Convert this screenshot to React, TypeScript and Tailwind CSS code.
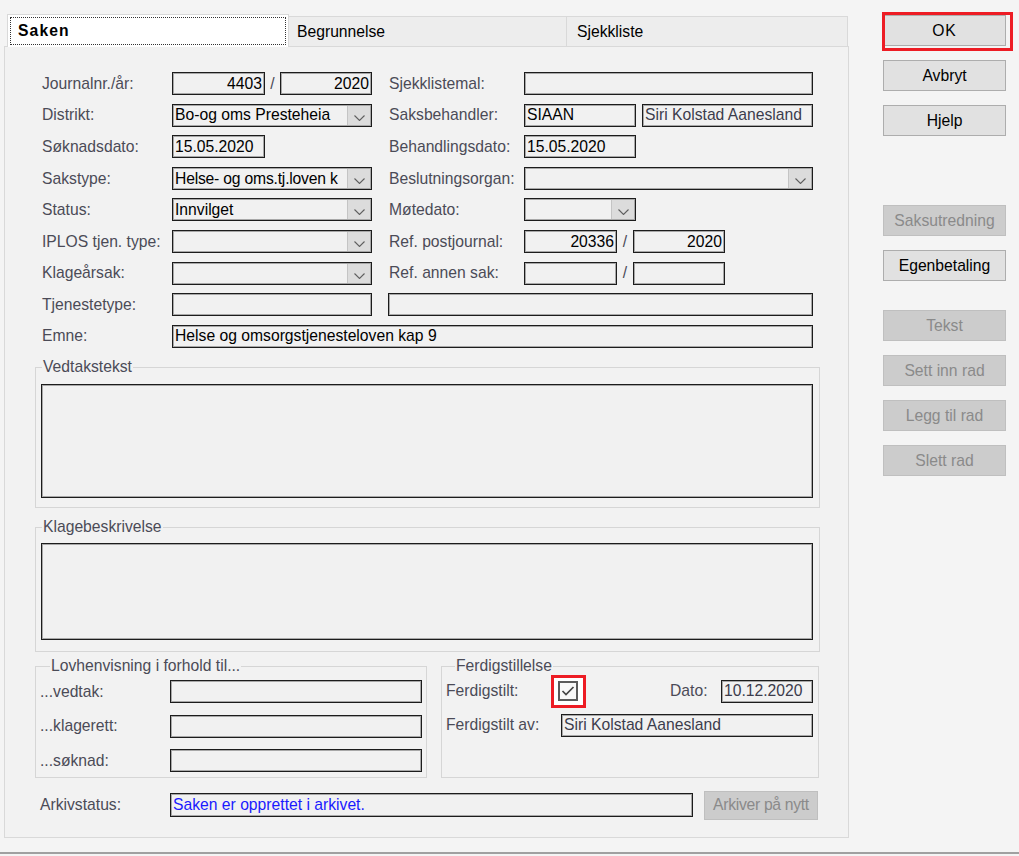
import clsx from 'clsx'
import { twMerge } from 'tailwind-merge'
import type { ReactNode } from 'react'

const cn = (...a: Parameters<typeof clsx>) => twMerge(clsx(...a))

function Label({ children, className }: { children?: ReactNode; className?: string }) {
  return <span className={cn('shrink-0 whitespace-nowrap text-[#4b4b57]', className)}>{children}</span>
}

function Box({ children, className }: { children?: ReactNode; className?: string }) {
  return (
    <div
      className={cn(
        'flex h-[23px] shrink-0 items-center overflow-hidden whitespace-nowrap border border-[#1c1c1c] bg-[#f1f1f1] px-[2px] shadow-[inset_0_0_0_1px_#a8a8a8]',
        className
      )}
    >
      {children}
    </div>
  )
}

function Combo({ children, className }: { children?: ReactNode; className?: string }) {
  return (
    <div
      className={cn(
        'flex h-[23px] shrink-0 items-stretch overflow-hidden border border-[#1c1c1c] bg-[#f1f1f1] shadow-[inset_0_0_0_1px_#a8a8a8]',
        className
      )}
    >
      <div className="flex min-w-0 flex-1 items-center overflow-hidden whitespace-nowrap pl-[2px]">{children}</div>
      <div className="m-[1px] flex w-[23px] shrink-0 items-end justify-center border-l border-[#c4c4c4] bg-[#dcdcdc] pb-[4px]">
        <svg width="11" height="6" viewBox="0 0 11 6">
          <polyline points="0.5,0.5 5.5,5.5 10.5,0.5" fill="none" stroke="#5f5f5f" strokeWidth="1.1" />
        </svg>
      </div>
    </div>
  )
}

function Group({ title, titleLeft, className, children }: { title: string; titleLeft: string; className?: string; children?: ReactNode }) {
  return (
    <div className={cn('relative shrink-0 border border-[#d6d6d6]', className)}>
      <span className={cn('absolute -top-[10px] bg-[#f2f2f2] px-[1px] leading-[18px] text-[#4b4b57]', titleLeft)}>{title}</span>
      {children}
    </div>
  )
}

function Btn({ children, disabled, className }: { children: ReactNode; disabled?: boolean; className?: string }) {
  return (
    <div
      className={cn(
        'flex h-[31px] w-[123px] shrink-0 items-center justify-center whitespace-nowrap border',
        disabled ? 'border-[#bfbfbf] bg-[#cccccc] text-[#8a8a8a]' : 'border-[#adadad] bg-[#e1e1e1] text-black',
        className
      )}
    >
      {children}
    </div>
  )
}

export default function App() {
  return (
    <div className="flex h-[856px] w-[1019px] flex-col overflow-hidden bg-[#f4f4f4] font-['Liberation_Sans',Arial,sans-serif] text-[15.7px] text-black">
      <div className="flex h-[852px]">
        {/* Tab control */}
        <div className="w-[850px] shrink-0 pl-[4px] pt-[14px]">
          <div className="flex h-[32px] items-end pl-[3px]">
            <div className="relative z-10 -mb-[1px] flex h-[33px] w-[282px] shrink-0 items-center border border-b-0 border-[#d9d9d9] bg-white p-[2px]">
              <div className="flex h-full w-full items-center border border-dotted border-[#333] pl-[7px] font-bold tracking-[1.1px]">Saken</div>
            </div>
            <div className="flex h-[30px] w-[278px] shrink-0 items-center border border-b-0 border-l-0 border-[#d9d9d9] bg-[#ededed] pl-[8px]">Begrunnelse</div>
            <div className="flex h-[30px] w-[281px] shrink-0 items-center border border-b-0 border-l-0 border-[#d9d9d9] bg-[#ededed] pl-[10px]">Sjekkliste</div>
          </div>

          <div className="h-[792px] w-[845px] border border-[#d9d9d9] bg-[#f2f2f2] pl-[30px] pt-[25px]">
            {/* Form rows */}
            <div className="flex flex-col gap-[8.6px] pl-[7px]">
              <div className="flex h-[23px] items-center">
                <div className="flex w-[330px] items-center">
                  <Label className="w-[130px]">Journalnr./år:</Label>
                  <Box className="w-[93px] justify-end">4403</Box>
                  <span className="w-[15px] text-center text-[#4b4b57]">/</span>
                  <Box className="w-[92px] justify-end">2020</Box>
                </div>
                <div className="ml-[17px] flex items-center">
                  <Label className="w-[135px]">Sjekklistemal:</Label>
                  <Box className="w-[289px]" />
                </div>
              </div>

              <div className="flex h-[23px] items-center">
                <div className="flex w-[330px] items-center">
                  <Label className="w-[130px]">Distrikt:</Label>
                  <Combo className="w-[200px]">Bo-og oms Presteheia</Combo>
                </div>
                <div className="ml-[17px] flex items-center">
                  <Label className="w-[135px]">Saksbehandler:</Label>
                  <Box className="w-[112px]">SIAAN</Box>
                  <Box className="ml-[6px] w-[171px] text-[#3c3c4c]">Siri Kolstad Aanesland</Box>
                </div>
              </div>

              <div className="flex h-[23px] items-center">
                <div className="flex w-[330px] items-center">
                  <Label className="w-[130px]">Søknadsdato:</Label>
                  <Box className="w-[93px]">15.05.2020</Box>
                </div>
                <div className="ml-[17px] flex items-center">
                  <Label className="w-[135px]">Behandlingsdato:</Label>
                  <Box className="w-[112px]">15.05.2020</Box>
                </div>
              </div>

              <div className="flex h-[23px] items-center">
                <div className="flex w-[330px] items-center">
                  <Label className="w-[130px]">Sakstype:</Label>
                  <Combo className="w-[200px]">
                    <span className="tracking-[-0.2px]">Helse- og oms.tj.loven k</span>
                  </Combo>
                </div>
                <div className="ml-[17px] flex items-center">
                  <Label className="w-[135px]">Beslutningsorgan:</Label>
                  <Combo className="w-[289px]" />
                </div>
              </div>

              <div className="flex h-[23px] items-center">
                <div className="flex w-[330px] items-center">
                  <Label className="w-[130px]">Status:</Label>
                  <Combo className="w-[200px]">Innvilget</Combo>
                </div>
                <div className="ml-[17px] flex items-center">
                  <Label className="w-[135px]">Møtedato:</Label>
                  <Combo className="w-[112px]" />
                </div>
              </div>

              <div className="flex h-[23px] items-center">
                <div className="flex w-[330px] items-center">
                  <Label className="w-[130px]">IPLOS tjen. type:</Label>
                  <Combo className="w-[200px]" />
                </div>
                <div className="ml-[17px] flex items-center">
                  <Label className="w-[135px]">Ref. postjournal:</Label>
                  <Box className="w-[93px] justify-end">20336</Box>
                  <span className="w-[16px] text-center text-[#4b4b57]">/</span>
                  <Box className="w-[92px] justify-end">2020</Box>
                </div>
              </div>

              <div className="flex h-[23px] items-center">
                <div className="flex w-[330px] items-center">
                  <Label className="w-[130px]">Klageårsak:</Label>
                  <Combo className="w-[200px]" />
                </div>
                <div className="ml-[17px] flex items-center">
                  <Label className="w-[135px]">Ref. annen sak:</Label>
                  <Box className="w-[93px]" />
                  <span className="w-[16px] text-center text-[#4b4b57]">/</span>
                  <Box className="w-[92px]" />
                </div>
              </div>

              <div className="flex h-[23px] items-center">
                <div className="flex w-[330px] items-center">
                  <Label className="w-[130px]">Tjenestetype:</Label>
                  <Box className="w-[200px]" />
                </div>
                <Box className="ml-[16px] w-[425px]" />
              </div>

              <div className="flex h-[23px] items-center">
                <Label className="w-[130px]">Emne:</Label>
                <Box className="w-[641px]">Helse og omsorgstjenesteloven kap 9</Box>
              </div>
            </div>

            {/* Vedtakstekst */}
            <Group title="Vedtakstekst" titleLeft="left-[6px]" className="mt-[19px] h-[141px] w-[785px] pl-[5px] pt-[16px]">
              <Box className="h-[114px] w-[772px]" />
            </Group>

            {/* Klagebeskrivelse */}
            <Group title="Klagebeskrivelse" titleLeft="left-[6px]" className="mt-[19px] h-[125px] w-[785px] pl-[5px] pt-[15px]">
              <Box className="h-[97px] w-[772px]" />
            </Group>

            {/* Lovhenvisning + Ferdigstillelse */}
            <div className="mt-[14px] flex gap-[14px]">
              <Group title="Lovhenvisning i forhold til..." titleLeft="left-[14px]" className="h-[112px] w-[392px] pl-[4px] pt-[13px]">
                <div className="flex flex-col gap-[11px]">
                  <div className="flex items-center">
                    <Label className="w-[130px]">...vedtak:</Label>
                    <Box className="w-[252px]" />
                  </div>
                  <div className="flex items-center">
                    <Label className="w-[130px]">...klagerett:</Label>
                    <Box className="w-[252px]" />
                  </div>
                  <div className="flex items-center">
                    <Label className="w-[130px]">...søknad:</Label>
                    <Box className="w-[252px]" />
                  </div>
                </div>
              </Group>

              <Group title="Ferdigstillelse" titleLeft="left-[13px]" className="h-[112px] w-[378px] pl-[4px] pr-[5px] pt-[13px]">
                <div className="flex flex-col gap-[11px]">
                  <div className="flex h-[23px] items-center">
                    <Label className="w-[112px]">Ferdigstilt:</Label>
                    <div className="relative h-[20px] w-[20px] shrink-0">
                      <div className="absolute -left-[7px] -top-[6px] h-[33px] w-[35px] border-[3px] border-[#ed1c24] bg-white" />
                      <div className="relative flex h-[20px] w-[20px] items-center justify-center border-2 border-[#5a5a5a] bg-[#f7f7f7]">
                        <svg width="14" height="12" viewBox="0 0 14 12">
                          <polyline points="1.5,6 5,9.5 12.5,2" fill="none" stroke="#444" strokeWidth="1.7" />
                        </svg>
                      </div>
                    </div>
                    <Label className="ml-auto w-[51px]">Dato:</Label>
                    <Box className="w-[92px] text-[#3c3c4c]">10.12.2020</Box>
                  </div>
                  <div className="flex h-[23px] items-center">
                    <Label className="w-[115px]">Ferdigstilt av:</Label>
                    <Box className="w-[252px] text-[#3c3c4c]">Siri Kolstad Aanesland</Box>
                  </div>
                </div>
              </Group>
            </div>

            {/* Arkivstatus */}
            <div className="mt-[13px] flex h-[29px] items-center pl-[5px]">
              <Label className="w-[130px]">Arkivstatus:</Label>
              <Box className="h-[24px] w-[523px] text-[#1a1aff]">Saken er opprettet i arkivet.</Box>
              <Btn disabled className="ml-[11px] h-[29px] w-[114px] tracking-[-0.3px]">
                Arkiver på nytt
              </Btn>
            </div>
          </div>
        </div>

        {/* Right buttons */}
        <div className="flex flex-col pl-[33px] pt-[15px]">
          <div className="relative">
            <div className="absolute -left-[1px] -top-[3px] h-[39px] w-[131px] border-[3px] border-[#ed1c24]" />
            <Btn className="tracking-[1px]">OK</Btn>
          </div>
          <Btn className="mt-[14px]">Avbryt</Btn>
          <Btn className="mt-[14px]">Hjelp</Btn>
          <Btn disabled className="mt-[69px]">Saksutredning</Btn>
          <Btn className="mt-[14px]">Egenbetaling</Btn>
          <Btn disabled className="mt-[29px]">Tekst</Btn>
          <Btn disabled className="mt-[14px]">Sett inn rad</Btn>
          <Btn disabled className="mt-[14px]">Legg til rad</Btn>
          <Btn disabled className="mt-[14px]">Slett rad</Btn>
        </div>
      </div>
      <div className="h-[2px] w-full bg-[#a0a0a0]" />
    </div>
  )
}
